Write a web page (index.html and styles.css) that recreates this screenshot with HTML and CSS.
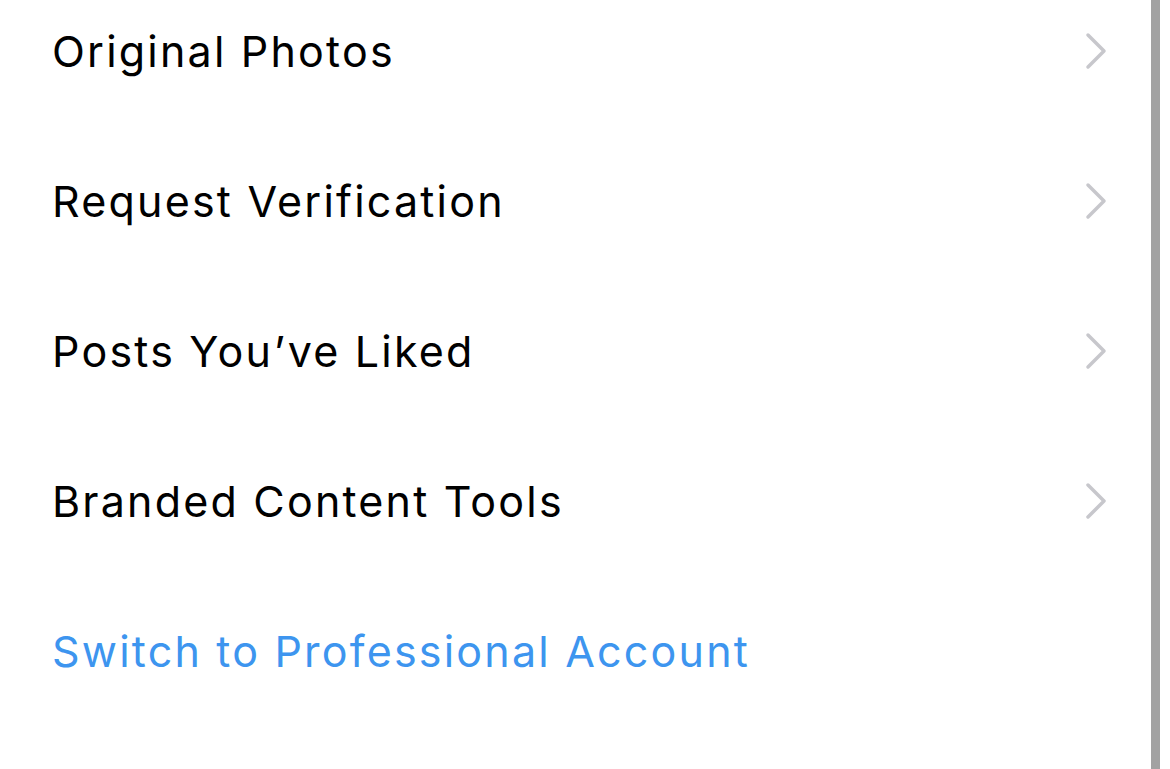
FILE: index.html
```html
<!DOCTYPE html>
<html lang="en">
<head>
  <meta charset="UTF-8" />
  <title>Account</title>
  <link rel="stylesheet" href="styles.css">
</head>
<body>
  <div class="screen">
    <ul class="menu">
      <li class="menu-item">
        <span>Original Photos</span>
        <svg class="chevron" viewBox="0 0 22 38"><path d="M3 3 L19 19 L3 35" /></svg>
      </li>
      <li class="menu-item">
        <span>Request Verification</span>
        <svg class="chevron" viewBox="0 0 22 38"><path d="M3 3 L19 19 L3 35" /></svg>
      </li>
      <li class="menu-item">
        <span>Posts You’ve Liked</span>
        <svg class="chevron" viewBox="0 0 22 38"><path d="M3 3 L19 19 L3 35" /></svg>
      </li>
      <li class="menu-item">
        <span>Branded Content Tools</span>
        <svg class="chevron" viewBox="0 0 22 38"><path d="M3 3 L19 19 L3 35" /></svg>
      </li>
      <li class="menu-item link">
        <span>Switch to Professional Account</span>
      </li>
    </ul>
    <div class="scrollbar"></div>
  </div>
</body>
</html>
```

FILE: styles.css
```css
body {
  margin: 0;
  background: #fff;
  font-family: Inter, "Noto Sans", sans-serif;
  overflow: hidden;
}

.screen {
  display: flex;
  height: 769px;
}

.menu {
  flex: 1;
  list-style: none;
  margin: -24px 0 0 0;
  padding: 0 0 0 52px;
}

.menu-item {
  height: 150px;
  display: flex;
  align-items: center;
  justify-content: space-between;
  padding-right: 44px;
  font-size: 43px;
  letter-spacing: 2.2px;
  color: #000;
}

.menu-item.link {
  color: #3d95ef;
}

.chevron {
  width: 22px;
  height: 38px;
  fill: none;
  stroke: #c7c7cc;
  stroke-width: 3.5;
  stroke-linecap: round;
  stroke-linejoin: round;
}

.scrollbar {
  width: 9px;
  background: #a2a2a2;
  margin-right: 10px;
}
```
